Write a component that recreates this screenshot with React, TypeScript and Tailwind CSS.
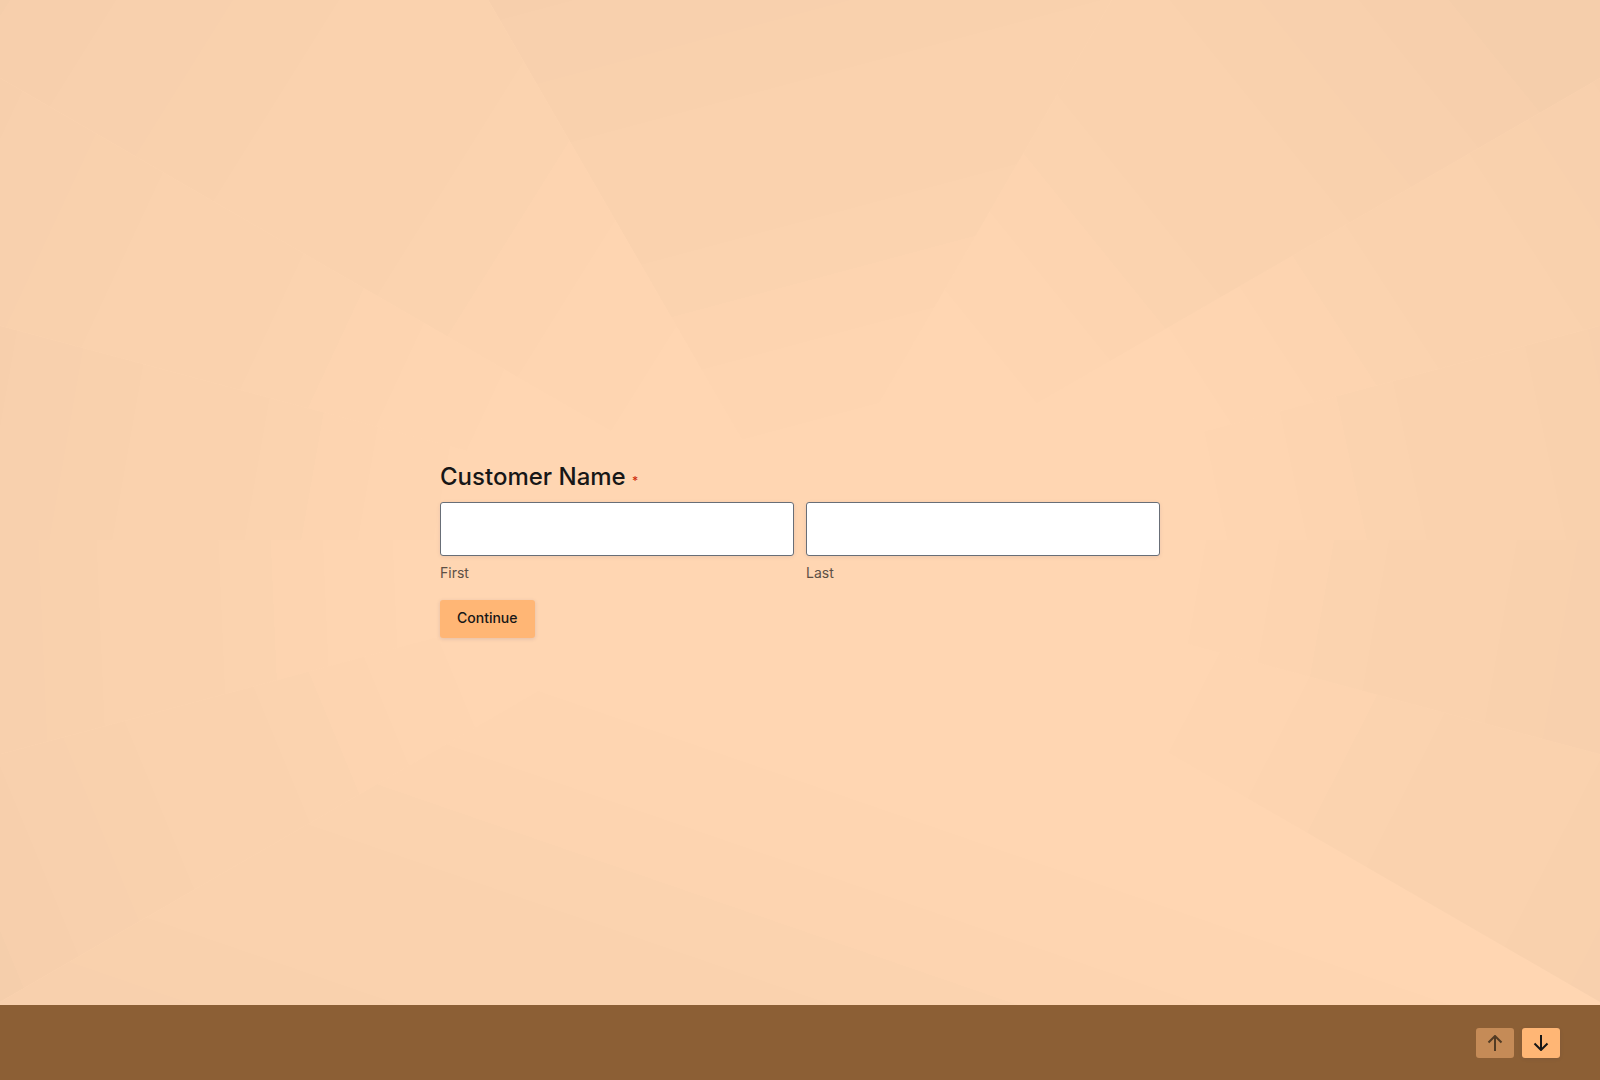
import { useState } from 'react'
import type { FormEvent } from 'react'

const CENTER = { x: 800, y: 540 }
const REACH = 2400

// Wedges of the backdrop. Angles are in degrees, counter-clockwise from the right.
// Each wedge darkens along `dir` in flat bands; the first one begins at `first`.
const WEDGES = [
  { from: 0, to: 15, dir: 12, first: 418, step: 65 },
  { from: 15, to: 30, dir: 33, first: 425, step: 68 },
  { from: 30, to: 60, dir: 39, first: 270, step: 70 },
  { from: 60, to: 120, dir: 105, first: 112, step: 65 },
  { from: 120, to: 150, dir: 148, first: 218, step: 90 },
  { from: 150, to: 165, dir: 155, first: 340, step: 77 },
  { from: 165, to: 180, dir: 170, first: 361, step: 62 },
  { from: 180, to: 195, dir: 182.5, first: 407, step: 58 },
  { from: 195, to: 210, dir: 202.5, first: 372, step: 63 },
  { from: 210, to: 330, dir: 251, first: 228, step: 67 },
  { from: 330, to: 345, dir: 333, first: 425, step: 76 },
  { from: 345, to: 360, dir: 350, first: 400, step: 60 },
]

// Band edges in steps from the first one
const BANDS = [0, 1.2, 2.1, 3, 5.1, 6.1, 7.2, 8.2, 10.1, 11.2, 12.2, 13.2]
const SPAN = 15

function pointAt(angle: number, distance: number) {
  const rad = (angle * Math.PI) / 180
  return { x: CENTER.x + Math.cos(rad) * distance, y: CENTER.y - Math.sin(rad) * distance }
}

function shade(n: number) {
  return `rgb(${255 - Math.round(n * 1.2)}, ${214 - Math.round(n)}, ${178 - Math.round(n * 0.9)})`
}

function Backdrop() {
  return (
    <svg
      aria-hidden="true"
      viewBox="0 0 1600 1080"
      preserveAspectRatio="xMidYMid slice"
      className="absolute inset-0 h-full w-full"
    >
      <defs>
        {WEDGES.map(w => {
          const a = pointAt(w.dir, w.first)
          const b = pointAt(w.dir, w.first + w.step * SPAN)
          return (
            <linearGradient key={w.from} id={`wedge-${w.from}`} gradientUnits="userSpaceOnUse" x1={a.x} y1={a.y} x2={b.x} y2={b.y}>
              {BANDS.flatMap((edge, i) => [
                <stop key={`${i}-a`} offset={edge / SPAN} stopColor={shade(i)} />,
                <stop key={`${i}-b`} offset={edge / SPAN} stopColor={shade(i + 1)} />,
              ])}
            </linearGradient>
          )
        })}
      </defs>
      {WEDGES.map(w => {
        const mid = pointAt((w.from + w.to) / 2, REACH * 2)
        const a = pointAt(w.from, REACH)
        const b = pointAt(w.to, REACH)
        return (
          <polygon
            key={w.from}
            points={`${CENTER.x},${CENTER.y} ${a.x},${a.y} ${mid.x},${mid.y} ${b.x},${b.y}`}
            fill={`url(#wedge-${w.from})`}
          />
        )
      })}
    </svg>
  )
}

function NameField({ id, label, value, onChange }: {
  id: string
  label: string
  value: string
  onChange: (value: string) => void
}) {
  return (
    <div className="flex flex-1 flex-col gap-[7px]">
      <input
        id={id}
        type="text"
        required
        value={value}
        onChange={e => onChange(e.target.value)}
        className="h-[54px] w-full rounded-[3px] border border-[#686e77] bg-white px-3 text-lg shadow-[0_1px_4px_rgba(18,25,97,0.08)] outline-none"
      />
      <label htmlFor={id} className="text-sm text-[#5d5045]">
        {label}
      </label>
    </div>
  )
}

function Arrow({ down = false }: { down?: boolean }) {
  return (
    <svg
      aria-hidden="true"
      viewBox="0 0 16 16"
      className="h-4 w-4"
      fill="none"
      stroke="currentColor"
      strokeWidth="2"
    >
      <path d={down ? 'M8 0v15M1.5 8.5 8 15l6.5-6.5' : 'M8 16V1M1.5 7.5 8 1l6.5 6.5'} />
    </svg>
  )
}

export default function App() {
  const [first, setFirst] = useState('')
  const [last, setLast] = useState('')

  function handleSubmit(e: FormEvent) {
    e.preventDefault()
  }

  return (
    <div className="relative flex min-h-screen flex-col bg-[#ffd6b2] font-['Inter',sans-serif] text-[#171717]">
      <Backdrop />

      <main className="relative flex flex-1 items-center justify-center px-6 pt-[93px]">
        <form onSubmit={handleSubmit} className="w-full max-w-[720px]">
          <fieldset>
            <legend className="mb-[9px] text-2xl font-medium">
              Customer Name <span className="text-xs font-medium text-[#d0300e]">*</span>
            </legend>
            <div className="flex gap-3">
              <NameField id="first-name" label="First" value={first} onChange={setFirst} />
              <NameField id="last-name" label="Last" value={last} onChange={setLast} />
            </div>
          </fieldset>
          <button
            type="submit"
            className="mt-[17px] h-[38px] rounded-[3px] bg-[#ffb675] px-[17px] pb-0.5 text-sm font-medium shadow-[0_1px_4px_rgba(18,25,97,0.12)]"
          >
            Continue
          </button>
        </form>
      </main>

      <footer className="relative flex h-[75px] items-center justify-end gap-2 bg-[#8c5f35] px-10">
        <button
          type="button"
          disabled
          aria-label="Previous question"
          className="flex h-[30px] w-[38px] items-center justify-center rounded-[3px] bg-[#c58b57] text-[#523b24]"
        >
          <Arrow />
        </button>
        <button
          type="button"
          aria-label="Next question"
          className="flex h-[30px] w-[38px] items-center justify-center rounded-[3px] bg-[#ffb675] shadow-[0_1px_4px_rgba(18,25,97,0.08)]"
        >
          <Arrow down />
        </button>
      </footer>
    </div>
  )
}
